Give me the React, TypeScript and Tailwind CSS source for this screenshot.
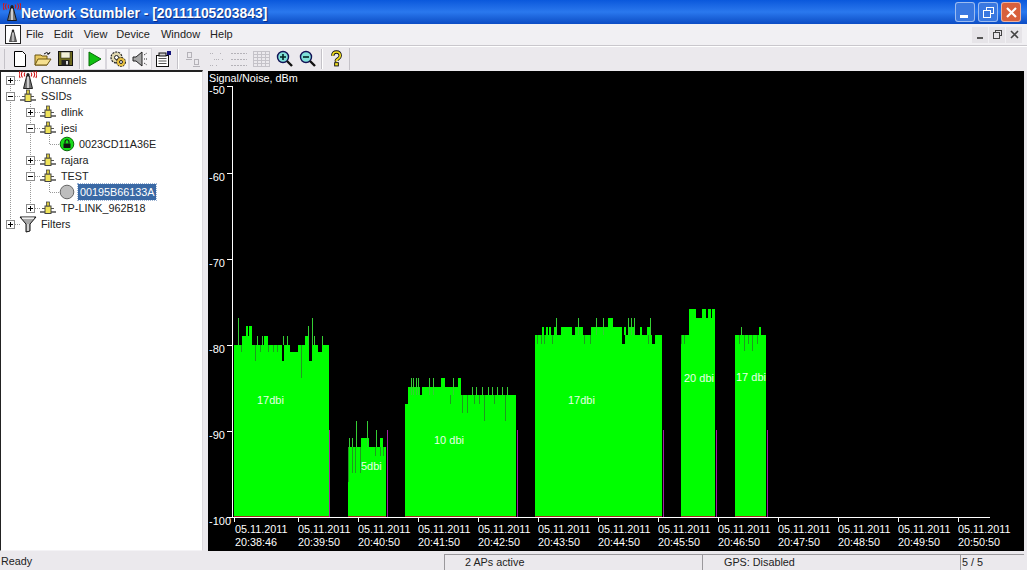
import React from "react";

const font = { fontFamily: '"Liberation Sans", Arial, sans-serif' };

function Antenna({ size = 18, waves = true }: { size?: number; waves?: boolean }) {
  return (
    <svg width={size} height={size} viewBox="0 0 18 18">
      {waves && (
        <g fill="none" stroke="#d01818" strokeWidth="1.1">
          <path d="M6 1.5Q4.5 3.5 6 5.5M3.5 0.5Q1.2 3.5 3.5 6.5M1.2 0Q-1 3.5 1.2 7M12 1.5Q13.5 3.5 12 5.5M14.5 0.5Q16.8 3.5 14.5 6.5M16.8 0Q19 3.5 16.8 7" />
        </g>
      )}
      <circle cx="9" cy="3.5" r="1.6" fill="#222" />
      <path d="M7.8 4.5h2.4l3.3 13h-9z" fill="#777" stroke="#111" strokeWidth="0.9" />
      <path d="M9 6v11" stroke="#e4e4e4" strokeWidth="1.6" />
    </svg>
  );
}

function SsidIcon() {
  return (
    <svg width="16" height="14" viewBox="0 0 16 14">
      <path d="M0 11h16" stroke="#222" strokeWidth="1.2" />
      <path d="M2 7.5h12" stroke="#555" strokeWidth="1" />
      <rect x="5" y="5" width="6" height="7.5" fill="#efe35a" stroke="#444" strokeWidth="1" />
      <rect x="6.5" y="1" width="3" height="4" fill="#d8c840" stroke="#444" strokeWidth="0.8" />
    </svg>
  );
}

function Funnel() {
  return (
    <svg width="18" height="18" viewBox="0 0 18 18">
      <path d="M1 2h16L11 9v7l-4 1V9z" fill="#a8a8a8" stroke="#111" strokeWidth="1" />
      <path d="M3 3.2h12" stroke="#eee" strokeWidth="1.6" />
      <path d="M9 9v7" stroke="#eee" strokeWidth="1.2" />
    </svg>
  );
}

function Expander({ open }: { open: boolean }) {
  return (
    <span className="relative block w-[9px] h-[9px] border border-[#8c8c8c] bg-white shrink-0">
      <span className="absolute left-[1px] top-[3px] w-[5px] h-[1px] bg-black" />
      {!open && <span className="absolute left-[3px] top-[1px] w-[1px] h-[5px] bg-black" />}
    </span>
  );
}

function TreeRow({
  level,
  open,
  icon,
  label,
  selected,
}: {
  level: 0 | 1 | 2;
  open?: boolean;
  icon: React.ReactNode;
  label: string;
  selected?: boolean;
}) {
  const pad = level === 0 ? "pl-[5px]" : level === 1 ? "pl-[25px]" : "pl-[58px]";
  return (
    <div className={`h-4 flex items-center relative text-[10.8px] text-[#222] ${pad}`}>
      {level < 2 && open !== undefined && <Expander open={open} />}
      <span className={`flex justify-center shrink-0 ${level === 2 ? "w-[16px]" : "w-[18px] ml-[4px]"}`}>{icon}</span>
      <span
        className={`ml-[3px] h-4 leading-4 whitespace-nowrap ${
          selected ? "px-[2px] bg-[#3a69a5] text-white outline-1 outline-dotted outline-[#9db4d4]" : "px-[1px]"
        }`}
      >
        {label}
      </span>
    </div>
  );
}

function Tree() {
  return (
    <div className="relative w-[203px] h-full bg-white border-l border-t-2 border-[#222] border-r-[#dddbe0] border-b-[#f4f3f6] border-r border-b shrink-0">
      <svg className="absolute left-0 top-0" width="200" height="170" fill="none" stroke="#999" strokeDasharray="1 1">
        <path d="M9.5 8V152M29.5 32V136M14 8.5H19M14 24.5H19M14 152.5H19M34 40.5H39M34 56.5H39M34 88.5H39M34 104.5H39M34 136.5H39M48.5 63V72.5H58M48.5 111V120.5H58" />
      </svg>
      <TreeRow level={0} open={false} icon={<Antenna />} label="Channels" />
      <TreeRow level={0} open={true} icon={<SsidIcon />} label="SSIDs" />
      <TreeRow level={1} open={false} icon={<SsidIcon />} label="dlink" />
      <TreeRow level={1} open={true} icon={<SsidIcon />} label="jesi" />
      <TreeRow
        level={2}
        icon={
          <svg width="16" height="16" viewBox="0 0 16 16">
            <circle cx="8" cy="8" r="6.8" fill="#18dc18" stroke="#0a6a0a" />
            <rect x="4.5" y="7.5" width="7" height="4.5" fill="#111" />
            <path d="M6 7.5V5.8a2 2 0 014 0v1.7" fill="none" stroke="#111" strokeWidth="1.1" />
          </svg>
        }
        label="0023CD11A36E"
      />
      <TreeRow level={1} open={false} icon={<SsidIcon />} label="rajara" />
      <TreeRow level={1} open={true} icon={<SsidIcon />} label="TEST" />
      <TreeRow
        level={2}
        icon={
          <svg width="16" height="16" viewBox="0 0 16 16">
            <circle cx="8" cy="8" r="6.8" fill="#bdbdbd" stroke="#666" />
          </svg>
        }
        label="00195B66133A"
        selected
      />
      <TreeRow level={1} open={false} icon={<SsidIcon />} label="TP-LINK_962B18" />
      <TreeRow level={0} open={false} icon={<Funnel />} label="Filters" />
    </div>
  );
}

type Rect = [number, number, number];
type Bar = { x1: number; x2: number; top: number; raises: Rect[]; cuts: Rect[]; purple: number };

const bars: Bar[] = [
  {
    x1: 234, x2: 329, top: 345,
    raises: [[238,1,318],[242,10,336],[246,2,326],[249,3,326],[257,1,336],[262,1,336],[264,4,336],[283,1,336],[287,1,336],[305,4,336],[308,1,326],[312,1,318],[314,1,336],[322,1,336]],
    cuts: [[241,1,352],[255,1,361],[260,1,352],[268,1,352],[273,1,352],[277,1,352],[282,2,361],[290,8,352],[301,1,378],[309,3,361],[318,4,352]],
    purple: 329,
  },
  {
    x1: 348, x2: 386, top: 447,
    raises: [[349,1,438],[352,1,438],[356,1,421],[361,8,438],[367,1,421],[376,1,430],[380,3,438]],
    cuts: [[348,1,482],[352,1,473],[355,1,473],[360,1,473],[375,1,456],[380,1,456],[383,1,456]],
    purple: 387,
  },
  {
    x1: 405, x2: 516, top: 395,
    raises: [[408,3,387],[411,1,378],[412,8,387],[413,1,378],[416,1,378],[418,1,378],[422,13,387],[429,1,378],[433,1,378],[435,12,387],[441,4,378],[447,14,387],[453,1,378],[458,3,378],[472,1,387],[476,1,387],[482,1,387],[488,1,387],[492,1,387],[497,1,387],[502,1,387],[507,1,387]],
    cuts: [[405,3,404],[450,1,404],[462,1,413],[467,1,413],[484,1,421],[505,1,421],[474,1,404],[479,1,404],[494,1,404]],
    purple: 517,
  },
  {
    x1: 535, x2: 662, top: 335,
    raises: [[542,2,327],[546,2,327],[549,2,327],[554,3,327],[556,1,318],[561,11,327],[575,8,327],[578,1,318],[591,17,327],[596,1,318],[603,1,318],[608,5,318],[613,3,327],[615,7,327],[624,2,327],[628,7,327],[628,1,318],[631,1,318],[634,1,318],[640,2,327],[647,4,327],[650,1,318]],
    cuts: [[537,1,344],[541,1,344],[544,1,344],[552,1,344],[584,1,344],[590,1,344],[622,3,344],[648,1,344],[652,3,344]],
    purple: 663,
  },
  {
    x1: 681, x2: 715, top: 335,
    raises: [[689,26,318],[689,5,309],[694,2,309],[702,4,309],[708,3,309],[712,3,309]],
    cuts: [[681,1,344],[684,1,344]],
    purple: 716,
  },
  {
    x1: 735, x2: 766, top: 335,
    raises: [[741,1,327],[759,2,327]],
    cuts: [[739,1,344],[744,1,351],[748,1,344],[752,1,351],[757,1,344]],
    purple: 767,
  },
];

function BarShape({ b }: { b: Bar }) {
  return (
    <g>
      <rect x={b.x1} y={b.top} width={b.x2 - b.x1} height={516 - b.top} fill="#00ff00" />
      {b.raises.map(([x, w, t], i) => (
        <rect key={i} x={x} y={t} width={w} height={b.top - t} fill={w === 1 ? "#34cf34" : "#00ff00"} />
      ))}
      {b.cuts.map(([x, w, bottom], i) => (
        <rect key={i} x={x} y={b.top} width={w} height={bottom - b.top} fill={w === 1 ? "#1f9a1f" : "#000"} />
      ))}
      <rect x={b.x1} y={516} width={b.x2 - b.x1} height={1} fill="#a02a20" />
      <rect x={b.purple} y={430} width={1} height={87} fill="#a020a0" />
    </g>
  );
}

const times = ["20:38:46","20:39:50","20:40:50","20:41:50","20:42:50","20:43:50","20:44:50","20:45:50","20:46:50","20:47:50","20:48:50","20:49:50","20:50:50"];
const xs = [235, 298, 358, 418, 478, 538, 598, 658, 718, 778, 838, 898, 958];
const yLabels: [string, number][] = [["-50",86],["-60",173],["-70",259],["-80",345],["-90",431],["-100",517]];
const dbi: [string, number, number][] = [["17dbi",257,404],["5dbi",361,470],["10 dbi",434,444],["17dbi",568,404],["20 dbi",684,382],["17 dbi",736,381]];

function Chart() {
  return (
    <svg className="block w-full h-full" viewBox="208 71 816 480" style={{ ...font }}>
      <rect x="208" y="71" width="816" height="480" fill="#000" />
      <text x="209" y="82" fill="#fff" fontSize="10.8">Signal/Noise, dBm</text>
      <rect x="232" y="86" width="1" height="432" fill="#fff" />
      <rect x="232" y="517" width="758" height="1" fill="#fff" />
      {yLabels.map(([t, y]) => (
        <g key={t}>
          <rect x="227" y={y} width="5" height="1" fill="#fff" />
          <text x="209" y={y + 8} fill="#fff" fontSize="11">{t}</text>
        </g>
      ))}
      {bars.map((b, i) => <BarShape key={i} b={b} />)}
      {dbi.map(([t, x, y]) => (
        <text key={t + x} x={x} y={y} fill="#e8ffe8" fontSize="11">{t}</text>
      ))}
      {xs.map((x, i) => (
        <g key={x}>
          <rect x={i === 0 ? 234 : x} y="518" width="1" height="4" fill="#fff" />
          <text x={x} y="533" fill="#fff" fontSize="10.8">05.11.2011</text>
          <text x={x} y="545.5" fill="#fff" fontSize="10.8">{times[i]}</text>
        </g>
      ))}
    </svg>
  );
}

function Tool({ children, active }: { children: React.ReactNode; active?: boolean }) {
  return (
    <div className={`w-[23px] h-[22px] flex items-center justify-center shrink-0 ${active ? "bg-[#f6f5f7] border border-[#d8d6dc]" : ""}`}>
      {children}
    </div>
  );
}

function Sep() {
  return <div className="w-[2px] h-[20px] bg-[#c4c2c8] border-r border-white mx-[2px] shrink-0" />;
}

function Toolbar() {
  return (
    <div className="h-[24px] flex items-center pl-[4px] bg-[#ebe9ed] border-t border-white shrink-0">
      <div className="w-[1px] h-[20px] bg-[#c4c2c8] mr-[3px] shrink-0" />
      <Tool>
        <svg width="14" height="16" viewBox="0 0 14 16"><path d="M1.5.5h8l3 3v12h-11z" fill="#fff" stroke="#000" /></svg>
      </Tool>
      <Tool>
        <svg width="18" height="16" viewBox="0 0 18 16"><path d="M1 14V4h6l1 1h5v9z" fill="#e8c860" stroke="#6a5510" /><path d="M1 14l3-6h13l-4 6z" fill="#f5e090" stroke="#6a5510" /><path d="M10 3Q13 0 15 3M15 3l1-2M15 3l-2 0" fill="none" stroke="#111" /></svg>
      </Tool>
      <Tool>
        <svg width="15" height="15" viewBox="0 0 15 15"><rect x=".5" y=".5" width="14" height="14" fill="#6e6a1e" stroke="#111" /><rect x="3" y="1" width="9" height="6" fill="#f2f0d8" stroke="#222" strokeWidth=".5" /><rect x="3.5" y="9" width="8" height="5.5" fill="#222" /><rect x="8" y="10" width="2" height="3.5" fill="#ddd" /></svg>
      </Tool>
      <Sep />
      <Tool active>
        <svg width="14" height="16" viewBox="0 0 14 16"><path d="M1 1l12 7-12 7z" fill="#10c010" stroke="#0a6a0a" /></svg>
      </Tool>
      <Tool active>
        <svg width="18" height="18" viewBox="0 0 18 18"><circle cx="7.5" cy="7.5" r="5.5" fill="#e0d8b0" stroke="#222" strokeWidth="1.2" strokeDasharray="2 1" /><circle cx="7.5" cy="7.5" r="2" fill="#fff" stroke="#222" /><circle cx="12" cy="12" r="4.5" fill="#e8c040" stroke="#222" strokeDasharray="2 1" /><circle cx="12" cy="12" r="1.5" fill="#fff" stroke="#222" /></svg>
      </Tool>
      <Tool active>
        <svg width="18" height="16" viewBox="0 0 18 16"><path d="M1 6h3l6-5v14l-6-5H1z" fill="#a8a8a8" stroke="#222" /><path d="M12 8h4M12 4l3-2M12 12l3 2" stroke="#222" strokeDasharray="1 1" /></svg>
      </Tool>
      <Tool>
        <svg width="18" height="18" viewBox="0 0 18 18"><rect x="1.5" y="5.5" width="12" height="11" fill="#fff" stroke="#111" /><rect x="4" y="3" width="7" height="3" fill="#ccc" stroke="#111" /><path d="M3.5 8.5h8M3.5 11h8M3.5 13.5h8" stroke="#555" /><rect x="12" y="1" width="4" height="4" fill="#14147a" /></svg>
      </Tool>
      <Sep />
      <Tool>
        <svg width="16" height="16" viewBox="0 0 16 16" fill="none" stroke="#b4b2b8"><rect x="2.5" y="1.5" width="4" height="5" /><rect x="9.5" y="8.5" width="4" height="5" /><path d="M1 8.5h6M8 15.5h7" /></svg>
      </Tool>
      <Tool>
        <svg width="16" height="16" viewBox="0 0 16 16" stroke="#b4b2b8" strokeDasharray="1 1"><path d="M2 2.5h4M6 8.5h5M2 14.5h4M12 2.5h2M14 8.5h2M8 14.5h2" /></svg>
      </Tool>
      <Tool>
        <svg width="18" height="16" viewBox="0 0 18 16" stroke="#b4b2b8" strokeDasharray="2 1"><path d="M1 2.5h16M1 8.5h16M1 14.5h16" /></svg>
      </Tool>
      <Tool>
        <svg width="17" height="16" viewBox="0 0 17 16" stroke="#c4c2c8" fill="none"><rect x=".5" y=".5" width="16" height="15" /><path d="M.5 3.5h16M.5 6.5h16M.5 9.5h16M.5 12.5h16M4.5 .5v15M8.5 .5v15M12.5 .5v15" /></svg>
      </Tool>
      <Tool>
        <svg width="18" height="18" viewBox="0 0 18 18"><circle cx="7" cy="7" r="5.5" fill="#7fe0d8" stroke="#115" strokeWidth="1.4" /><path d="M4 7h6M7 4v6" stroke="#022" strokeWidth="1.6" /><path d="M11 11l5 5" stroke="#111" strokeWidth="2.4" /></svg>
      </Tool>
      <Tool>
        <svg width="18" height="18" viewBox="0 0 18 18"><circle cx="7" cy="7" r="5.5" fill="#7fe0d8" stroke="#115" strokeWidth="1.4" /><path d="M4 7h6" stroke="#022" strokeWidth="1.6" /><path d="M11 11l5 5" stroke="#111" strokeWidth="2.4" /></svg>
      </Tool>
      <Sep />
      <Tool>
        <svg width="13" height="17" viewBox="0 0 14 18"><path d="M3 6Q3 2 7 2t4 4q0 2-2.5 3.5T7 12" fill="none" stroke="#111" strokeWidth="3.6" /><path d="M3 6Q3 2 7 2t4 4q0 2-2.5 3.5T7 12" fill="none" stroke="#f4e020" strokeWidth="1.8" /><rect x="5" y="13.5" width="4" height="3.5" fill="#f4e020" stroke="#111" /></svg>
      </Tool>
      <div className="w-[1px] h-[22px] bg-[#c4c2c8] ml-[1px] shrink-0" />
    </div>
  );
}

export default function App() {
  return (
    <div className="w-[1027px] h-[570px] flex flex-col overflow-hidden bg-[#ebe9ed]" style={font}>
      {/* title bar */}
      <div className="h-[24px] flex items-center shrink-0 bg-gradient-to-b from-[#0a58dc] via-[#2a78ee] to-[#0c4cc4] pl-[3px] pr-[6px]">
        <Antenna size={18} />
        <span className="pt-[2px] text-white font-bold text-[13.9px] whitespace-nowrap [text-shadow:1px_1px_1px_#0a2a80]">
          Network Stumbler - [20111105203843]
        </span>
        <div className="ml-auto flex gap-[3px]">
          <div className="w-[20px] h-[20px] rounded-[3px] border border-white/50 bg-[#3a78e0] relative">
            <span className="absolute left-[4px] bottom-[3px] w-[8px] h-[3px] bg-white" />
          </div>
          <div className="w-[20px] h-[20px] rounded-[3px] border border-white/50 bg-[#3a78e0] flex items-center justify-center">
            <svg width="13" height="13" viewBox="0 0 13 13" fill="none" stroke="#fff"><rect x="4.5" y="1.5" width="7" height="6" /><rect x="1.5" y="4.5" width="7" height="7" fill="#3a78e0" /></svg>
          </div>
          <div className="w-[20px] h-[20px] rounded-[3px] border border-white/50 bg-[#d8603c] flex items-center justify-center">
            <svg width="13" height="13" viewBox="0 0 13 13" stroke="#fff" strokeWidth="2.2"><path d="M2 2l9 9M11 2l-9 9" /></svg>
          </div>
        </div>
      </div>

      {/* menu */}
      <div className="h-[22px] flex items-center shrink-0 bg-[#f1f0f3] border-b border-[#c9c7cc] text-[11px] text-[#222]">
        <div className="w-[16px] h-[19px] ml-[5px] bg-white border border-[#222] flex items-center justify-center">
          <Antenna size={14} waves={false} />
        </div>
        <span className="ml-[5px]">File</span>
        <span className="ml-[10px]">Edit</span>
        <span className="ml-[11px]">View</span>
        <span className="ml-[9px]">Device</span>
        <span className="ml-[11px]">Window</span>
        <span className="ml-[10px]">Help</span>
        <div className="ml-auto mr-[5px] flex gap-[1px]">
          <div className="w-[16px] h-[16px] bg-[#e6e4e8] flex items-end justify-center pb-[4px]"><span className="w-[6px] h-[2px] bg-[#555]" /></div>
          <div className="w-[16px] h-[16px] bg-[#e6e4e8] flex items-center justify-center">
            <svg width="9" height="9" viewBox="0 0 9 9" fill="none" stroke="#444"><rect x="2.5" y=".5" width="6" height="5" /><rect x=".5" y="2.5" width="6" height="6" fill="#e6e4e8" /></svg>
          </div>
          <div className="w-[16px] h-[16px] bg-[#e6e4e8] flex items-center justify-center">
            <svg width="9" height="9" viewBox="0 0 9 9" stroke="#444" strokeWidth="1.6"><path d="M1 1l7 7M8 1L1 8" /></svg>
          </div>
        </div>
      </div>

      <Toolbar />

      {/* main */}
      <div className="flex-1 min-h-0 flex pr-[3px]">
        <Tree />
        <div className="w-[5px] shrink-0 bg-[#ebe9ed]" />
        <div className="flex-1 min-w-0 mt-[1px]">
          <Chart />
        </div>
      </div>

      {/* status */}
      <div className="h-[19px] pt-[3px] flex shrink-0 text-[10.8px] text-[#222] leading-[15px] bg-[#ebe9ed] pr-[3px]">
        <div className="w-[444px] pl-[1px]">Ready</div>
        <div className="w-[258px] border-l border-t border-[#9a989c] pl-[20px]">2 APs active</div>
        <div className="w-[258px] border-l border-t border-[#9a989c] pl-[21px]">GPS: Disabled</div>
        <div className="flex-1 border-l border-t border-[#9a989c] pl-[1px]">5 / 5</div>
      </div>
    </div>
  );
}
